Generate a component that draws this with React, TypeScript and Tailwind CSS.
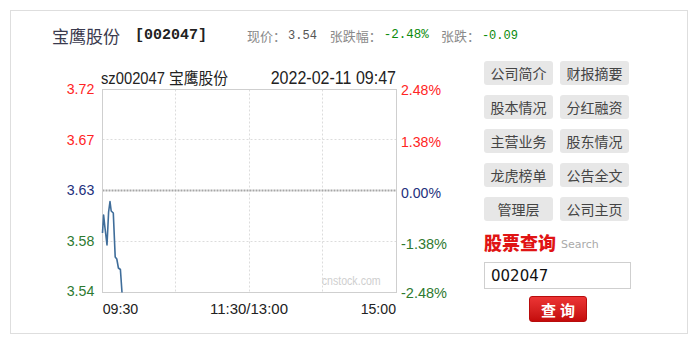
import React from "react";

const links = [
  "公司简介",
  "财报摘要",
  "股本情况",
  "分红融资",
  "主营业务",
  "股东情况",
  "龙虎榜单",
  "公告全文",
  "管理层",
  "公司主页",
];

// [text, x, baselineY, width, color]
const leftLabels: [string, number, number, number, string][] = [
  ["3.72", 66.7, 93.5, 27.6, "#ff2424"],
  ["3.67", 66.7, 144.5, 27.6, "#ff2424"],
  ["3.63", 66.7, 194.5, 27.6, "#24307c"],
  ["3.58", 66.7, 246, 27.6, "#2e7a30"],
  ["3.54", 66.7, 296, 27.6, "#2e7a30"],
];

const rightLabels: [string, number, number, number, string][] = [
  ["2.48%", 401, 95, 40, "#ff2424"],
  ["1.38%", 401, 147, 40, "#ff2424"],
  ["0.00%", 401, 197.5, 40, "#24307c"],
  ["-1.38%", 401, 248.5, 46, "#2e7a30"],
  ["-2.48%", 401, 298, 46, "#2e7a30"],
];

const pricePts = [
  [102.5, 233],
  [103.6, 215],
  [105, 228],
  [107, 245],
  [108.6, 212],
  [110, 201.5],
  [111.2, 211],
  [113.3, 213],
  [115.2, 257],
  [116.8, 259],
  [118.4, 268],
  [120.4, 269.5],
  [122, 292.5],
];

const Chart = () => (
  <svg width={420} height={265} viewBox="40 60 420 265" className="shrink-0">
    <g fontFamily='"Liberation Sans", "Noto Sans CJK SC", sans-serif'>
      <text x={101} y={84} fontSize={16} fill="#222" textLength={127} lengthAdjust="spacingAndGlyphs">
        sz002047 宝鹰股份
      </text>
      <text x={270.7} y={83.5} fontSize={18} fill="#222" textLength={125.3} lengthAdjust="spacingAndGlyphs">
        2022-02-11  09:47
      </text>

      {/* grid */}
      <line x1={102.5} y1={139.5} x2={396.5} y2={139.5} stroke="#dcdcdc" strokeDasharray="2 2" />
      <line x1={102.5} y1={241.5} x2={396.5} y2={241.5} stroke="#dcdcdc" strokeDasharray="2 2" />
      {[175.5, 249.5, 322.5].map((x) => (
        <line key={x} x1={x} y1={89.5} x2={x} y2={292.5} stroke="#dcdcdc" strokeDasharray="2 2" />
      ))}
      <line x1={102.5} y1={190.5} x2={396.5} y2={190.5} stroke="#a6a6a6" strokeWidth={2} strokeDasharray="2 1" />
      <rect x={102.5} y={89.5} width={294} height={203} fill="none" stroke="#cfcfcf" />

      <text x={321.7} y={284.5} fontSize={12} fill="#cfcfcf" textLength={59} lengthAdjust="spacingAndGlyphs">
        cnstock.com
      </text>

      <polyline
        points={pricePts.map((p) => p.join(",")).join(" ")}
        fill="none"
        stroke="#3f6d9a"
        strokeWidth={1.6}
        strokeLinejoin="round"
      />

      {[...leftLabels, ...rightLabels].map(([t, x, y, w, c]) => (
        <text key={t + x} x={x} y={y} fontSize={14} fill={c} textLength={w} lengthAdjust="spacingAndGlyphs">
          {t}
        </text>
      ))}

      <text x={102.7} y={313.5} fontSize={14} fill="#222" textLength={35.6} lengthAdjust="spacingAndGlyphs">
        09:30
      </text>
      <text x={210} y={313.5} fontSize={14} fill="#222" textLength={78} lengthAdjust="spacingAndGlyphs">
        11:30/13:00
      </text>
      <text x={360.7} y={313.5} fontSize={14} fill="#222" textLength={35.3} lengthAdjust="spacingAndGlyphs">
        15:00
      </text>
    </g>
  </svg>
);

export default function App() {
  return (
    <div className="w-[700px] h-[345px] bg-white overflow-hidden font-['Noto_Sans_CJK_SC','Noto_Sans',sans-serif]">
      <div className="ml-[10px] mt-[10px] w-[678px] h-[324px] border border-[#dedede] flex flex-col">
        {/* header */}
        <div className="h-[49px] flex items-center pl-[41px] shrink-0 leading-none">
          <span className="text-[17px] text-[#3a3a4e]">宝鹰股份</span>
          <span className="ml-[15px] text-[15px] font-bold text-[#222] font-['Liberation_Mono',monospace]">
            [002047]
          </span>
          <span className="ml-[40px] text-[13px] text-[#8a8a8a]">现价：</span>
          <span className="ml-[2px] text-[12px] text-[#555] font-['Liberation_Mono',monospace]">3.54</span>
          <span className="ml-[13px] text-[13px] text-[#8a8a8a]">张跌幅：</span>
          <span className="ml-[2px] text-[12.5px] text-[#0a8a0a] font-['Liberation_Mono',monospace]">-2.48%</span>
          <span className="ml-[12px] text-[13px] text-[#8a8a8a]">张跌：</span>
          <span className="ml-[2px] text-[12px] text-[#0a8a0a] font-['Liberation_Mono',monospace]">-0.09</span>
        </div>

        {/* body */}
        <div className="flex">
          <div className="ml-[29px]">
            <Chart />
          </div>

          <div className="ml-[24px] pt-[1px] w-[147px] flex flex-col">
            <div className="grid grid-cols-[69px_69px] gap-x-[7px] gap-y-[10px]">
              {links.map((l) => (
                <div
                  key={l}
                  className="h-[24px] rounded-[3px] bg-[#e7e7e7] text-[#444] text-[14px] flex items-center justify-center leading-none"
                >
                  {l}
                </div>
              ))}
            </div>

            <div className="mt-[10px] h-[20px] flex items-end leading-none">
              <span className="text-[18px] font-black text-[#e01414]">股票查询</span>
              <span className="ml-[5px] mb-[1px] text-[11px] text-[#aaa] font-['DejaVu_Sans',sans-serif]">
                Search
              </span>
            </div>

            <input
              readOnly
              value="002047"
              className="mt-[11px] w-[147px] h-[27px] border border-[#cfcfcf] px-[6px] text-[15px] text-[#111] outline-none font-['DejaVu_Sans',sans-serif]"
            />

            <div className="mt-[7px] flex justify-center pl-[1px]">
              <button className="w-[58px] h-[26px] rounded-[3px] border border-[#b80c0c] bg-gradient-to-b from-[#ec3434] to-[#c40a0a] text-white text-[15px] font-bold tracking-[4px] pl-[4px] leading-none">
                查询
              </button>
            </div>
          </div>
        </div>
      </div>
    </div>
  );
}
